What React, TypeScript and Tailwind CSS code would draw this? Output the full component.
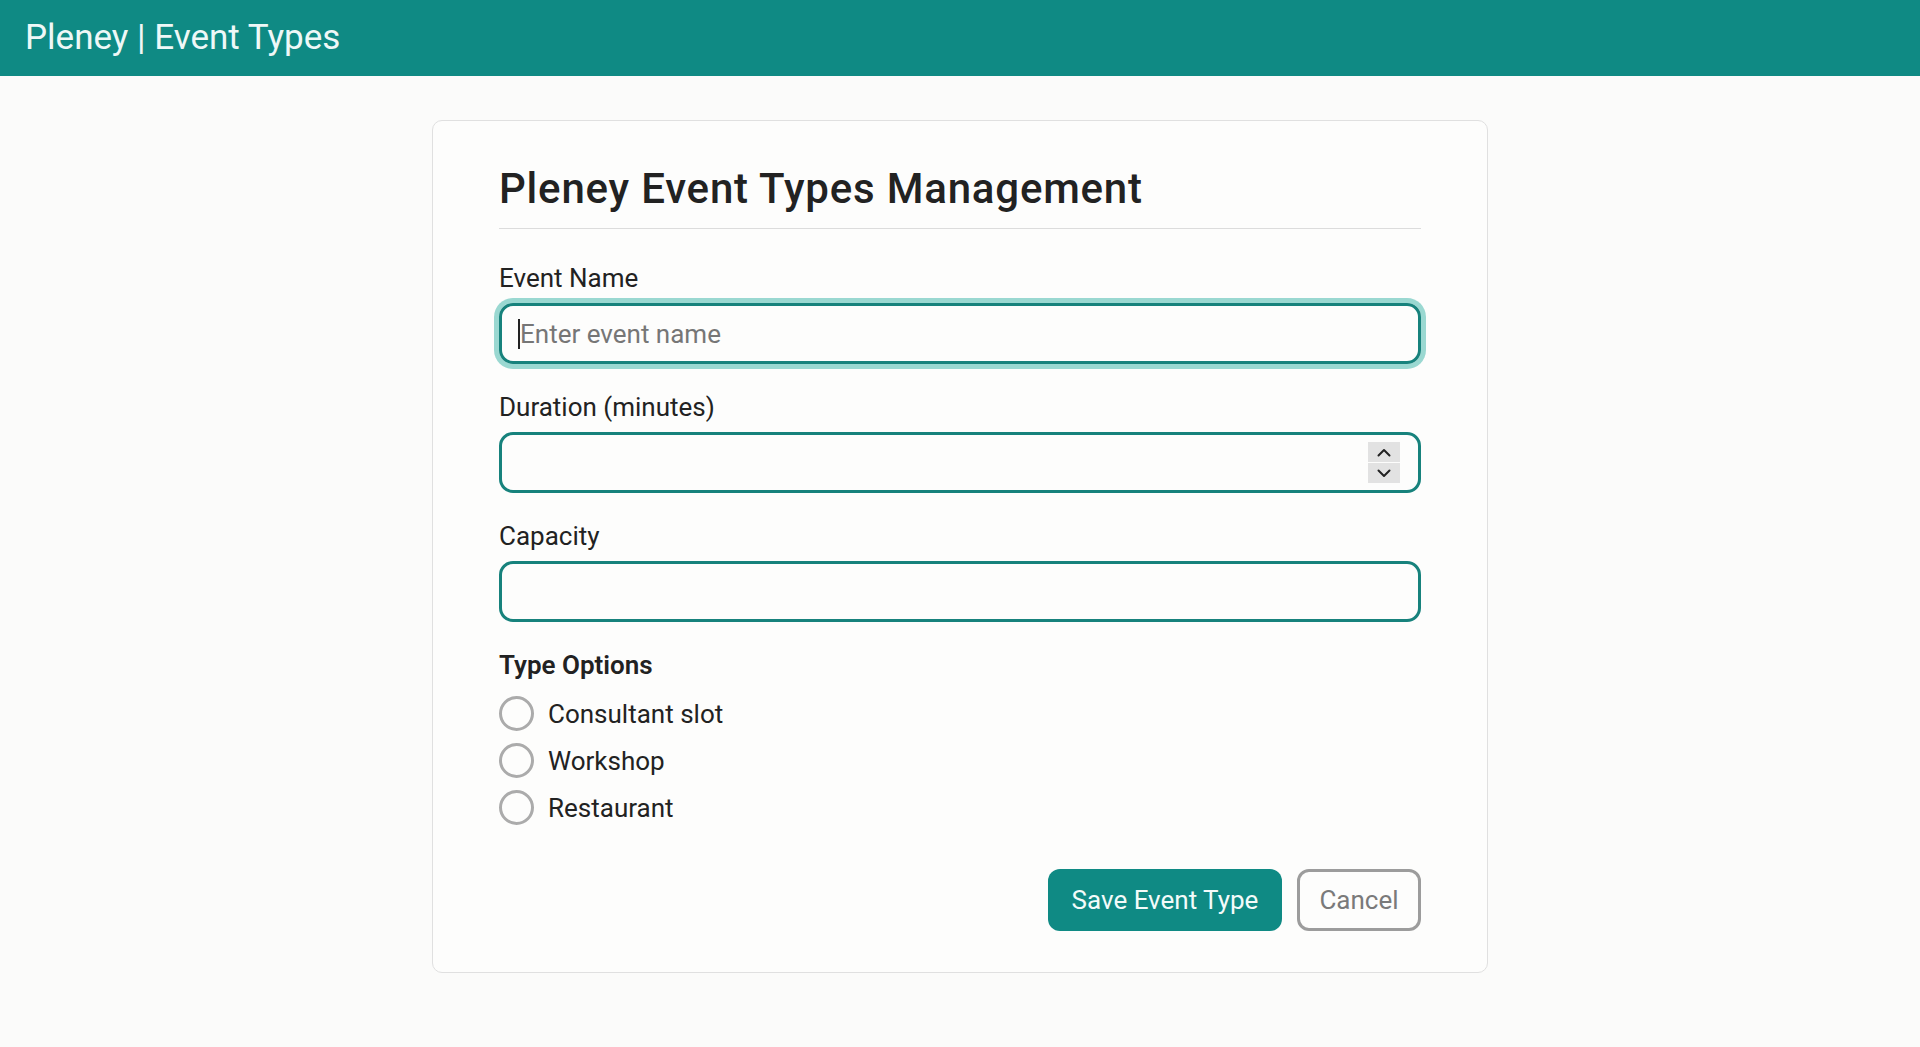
import React from "react";

function Field({ label, children }: { label: string; children: React.ReactNode }) {
  return (
    <div className="flex flex-col">
      <label className="text-[26px] leading-[30px] text-[#222] mb-[10px]">{label}</label>
      {children}
    </div>
  );
}

function Chevron({ up }: { up?: boolean }) {
  return (
    <svg width="14" height="9" viewBox="0 0 14 9" fill="none">
      <path
        d={up ? "M1.5 7.5 L7 2 L12.5 7.5" : "M1.5 1.5 L7 7 L12.5 1.5"}
        stroke="#222"
        strokeWidth="2"
        strokeLinecap="round"
        strokeLinejoin="round"
      />
    </svg>
  );
}

export default function App() {
  const options = ["Consultant slot", "Workshop", "Restaurant"];
  return (
    <div className="min-h-[1047px] bg-[#fbfbfa] font-['Roboto',sans-serif]">
      <header className="h-[76px] bg-[#0f8a84] flex items-center px-[25px]">
        <h1 className="text-[35px] leading-[40px] text-[#eef8f7] font-normal">Pleney | Event Types</h1>
      </header>
      <main className="flex justify-center pt-[44px]">
        <div className="w-[1056px] bg-[#fdfdfc] border border-[#e0e0e0] rounded-[10px] px-[66px] pt-[43px] pb-[41px]">
          <h2 className="text-[42px] leading-[50px] font-medium tracking-[0.8px] text-[#222] pb-[14px] border-b border-[#dcdcdc]">
            Pleney Event Types Management
          </h2>
          <div className="flex flex-col gap-[28px] mt-[34px]">
            <Field label="Event Name">
              <div className="relative">
                <input
                  type="text"
                  placeholder="Enter event name"
                  className="w-full h-[61px] border-[3px] border-[#17827c] rounded-[14px] ring-[5px] ring-[#9ad8d1] pl-[18px] pr-4 text-[26px] text-[#222] placeholder:text-[#767676] bg-transparent outline-none caret-transparent"
                />
                <span className="absolute left-[19px] top-[16px] w-[2px] h-[30px] bg-[#222]" />
              </div>
            </Field>
            <Field label="Duration (minutes)">
              <div className="relative">
                <input
                  type="text"
                  className="w-full h-[61px] border-[3px] border-[#17827c] rounded-[14px] pl-[18px] pr-16 text-[26px] text-[#222] bg-transparent outline-none"
                />
                <div className="absolute right-[21px] top-[10px] flex flex-col gap-[1px]">
                  <div className="w-[32px] h-[20px] bg-[#e2e2e2] flex items-center justify-center">
                    <Chevron up />
                  </div>
                  <div className="w-[32px] h-[20px] bg-[#e2e2e2] flex items-center justify-center">
                    <Chevron />
                  </div>
                </div>
              </div>
            </Field>
            <Field label="Capacity">
              <input
                type="text"
                className="w-full h-[61px] border-[3px] border-[#17827c] rounded-[14px] pl-[18px] pr-4 text-[26px] text-[#222] bg-transparent outline-none"
              />
            </Field>
            <div>
              <div className="text-[26px] leading-[30px] font-semibold text-[#222]">Type Options</div>
              <div className="mt-[10px] flex flex-col">
                {options.map((o) => (
                  <label key={o} className="h-[47px] flex items-center gap-[14px]">
                    <span className="w-[35px] h-[35px] rounded-full border-[3px] border-[#ababab] bg-[#fdfdfc]" />
                    <span className="text-[26px] leading-[30px] text-[#222]">{o}</span>
                  </label>
                ))}
              </div>
            </div>
          </div>
          <div className="flex justify-end gap-[15px] mt-[38px]">
            <button className="w-[234px] h-[62px] rounded-[12px] bg-[#0f8a84] text-[#f3fbfa] text-[26px]">
              Save Event Type
            </button>
            <button className="w-[124px] h-[62px] rounded-[12px] border-[3px] border-[#9c9c9c] text-[#7a7a7a] text-[26px] bg-transparent">
              Cancel
            </button>
          </div>
        </div>
      </main>
    </div>
  );
}
